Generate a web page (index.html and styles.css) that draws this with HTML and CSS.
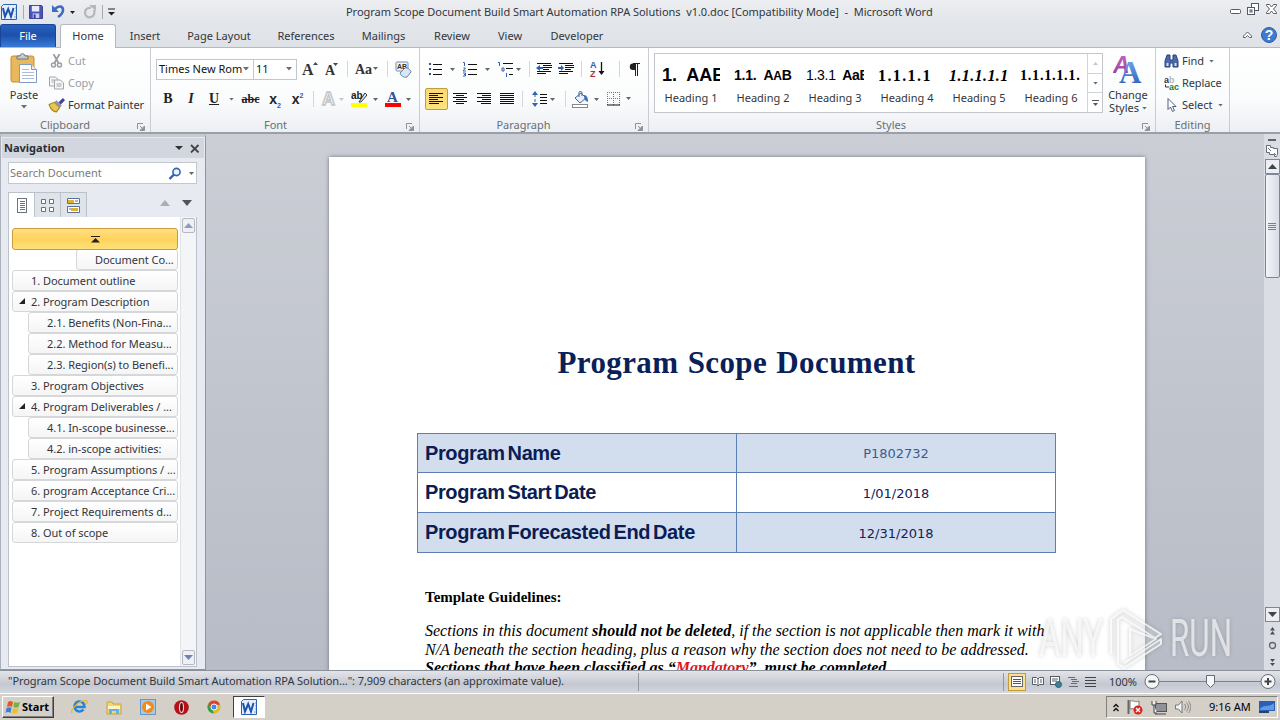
FILE: index.html
```html
<!DOCTYPE html>
<html lang="en">
<head>
<meta charset="utf-8">
<title>Program Scope Document - Microsoft Word</title>
<link rel="stylesheet" href="styles.css">
</head>
<body>
<svg class="defs" width="0" height="0">
  <defs>
    <linearGradient id="gblue" x1="0" y1="0" x2="0" y2="1"><stop offset="0" stop-color="#7fb0ea"/><stop offset="1" stop-color="#2458b8"/></linearGradient>
    <linearGradient id="gpurple" x1="0" y1="0" x2="0" y2="1"><stop offset="0" stop-color="#c964c4"/><stop offset="1" stop-color="#8a3f9c"/></linearGradient>
    <symbol id="dd" viewBox="0 0 6 4"><path d="M0 0h6L3 3.4z" fill="#6a6f77"/></symbol>
    <symbol id="launch" viewBox="0 0 8 8"><path d="M.5 6V.5H6" fill="none" stroke="#8d939b"/><path d="M3 3l2 2M7.500 3v4.500H3z" stroke="#8d939b" fill="#8d939b"/></symbol>
    <symbol id="word" viewBox="0 0 16 16"><path d="M.500 2.500l2-2h13v15H.500z" fill="#e4effb" stroke="#2b5fb0"/><path d="M14 4h1M14 7h1M14 10h1M13 13h2" stroke="#7aa0d8"/><path d="M2 4l2 8.500L7.200 5l2.800 7.500L12.500 4" fill="none" stroke="#1d53ad" stroke-width="2"/></symbol>
  </defs>
</svg>

<header class="titlebar">
  <div class="quick">
    <svg width="16" height="16"><use href="#word"/></svg>
    <i class="vline"></i>
    <svg width="14" height="14" viewBox="0 0 15 15"><path d="M.5.5h13l1 1v13H.5z" fill="#4a55b8" stroke="#34398f"/><path d="M3 1h8v6H3z" fill="#e8ecfa"/><path d="M4 9h7v5H4z" fill="#c9cdea"/><path d="M5 10h2v4H5z" fill="#34398f"/></svg>
    <svg width="24" height="15" viewBox="0 0 24 15"><path d="M3 5c4-4 8-3 8 1 0 3-2 5-5 7" fill="none" stroke="#3e6cc4" stroke-width="2.600"/><path d="M0 1v7h7z" fill="#3e6cc4"/><path d="M18 7h5l-2.500 3z" fill="#222"/></svg>
    <svg width="12" height="14" viewBox="0 0 12 14"><path d="M7 3c-4-1-6 2-6 5s3 5 6 4 4-4 3-7" fill="none" stroke="#b4b7bb" stroke-width="2.200"/><path d="M5 0h7v6z" fill="#b4b7bb"/></svg>
    <i class="vline"></i>
    <svg width="7" height="8" viewBox="0 0 7 8"><path d="M0 1h7" stroke="#222"/><path d="M0 4h7L3.500 7.500z" fill="#222"/></svg>
  </div>
  <div class="title">Program Scope Document Build Smart Automation RPA Solutions&nbsp; v1.0.doc [Compatibility Mode]&nbsp; - &nbsp;Microsoft Word</div>
  <svg class="winbtns" width="48" height="13" viewBox="0 0 48 13"><g fill="#fff" stroke="#555b66"><rect x=".5" y="6.500" width="10" height="4" rx="1"/><rect x="21.500" y=".5" width="7" height="7"/><rect x="17.500" y="4.500" width="7" height="7"/><rect x="20" y="7" width="2" height="2"/><path d="M36.500 1.500h3l2 2.500 2-2.500h3v1L43.500 6l3 3.500v1h-3l-2-2.500-2 2.500h-3v-1l3-3.500-3-3.500z"/></g></svg>
</header>

<nav class="tabs">
  <span class="tab file">File</span><span class="tab home">Home</span><span class="tab insert">Insert</span><span class="tab layout">Page Layout</span><span class="tab refs">References</span><span class="tab mail">Mailings</span><span class="tab review">Review</span><span class="tab view">View</span><span class="tab dev">Developer</span>
  <svg class="help" width="37" height="18" viewBox="0 0 37 18"><path d="M1.500 10L5.500 6l4 4v1.500h-2l-2-2-2 2h-2z" fill="#fff" stroke="#5d636d"/><circle cx="27" cy="9" r="7.500" fill="#3f7bd0" stroke="#2c5ea8"/><text x="27" y="14" text-anchor="middle" class="qmark">?</text></svg>
</nav>

<section class="ribbon">
  <div class="group clipboard">
    <div class="group-body">
      <div class="big paste">
        <svg width="28" height="31" viewBox="0 0 28 31"><rect x="1" y="3" width="23" height="26" rx="2" fill="#e9b75c" stroke="#c48d35"/><path d="M7 6V3h3c0-3 5-3 5 0h3v3z" fill="#c8ccd2" stroke="#70757c"/><path d="M9.500 11.500h12l5 5v13h-17z" fill="#fff" stroke="#7f9cc8"/><path d="M21.500 11.500v5h5" fill="#dfe9f7" stroke="#7f9cc8"/><path d="M12 16.500h7M12 19.500h12M12 22.500h12M12 25.500h12" stroke="#a9bddb"/></svg>
        <span>Paste</span>
        <svg width="6" height="4"><use href="#dd"/></svg>
      </div>
      <div class="cmds">
        <div class="cmd off"><svg width="17" height="14" viewBox="0 0 16 14"><path d="M5 0l5 9M11 0L6 9" stroke="#9a9ea4" stroke-width="1.800"/><circle cx="5" cy="11" r="2" fill="none" stroke="#9a9ea4" stroke-width="1.500"/><circle cx="11" cy="11" r="2" fill="none" stroke="#9a9ea4" stroke-width="1.500"/></svg><span>Cut</span></div>
        <div class="cmd off"><svg width="17" height="14" viewBox="0 0 16 14"><path d="M1 1h6l2 2v7H1z" fill="#f6f6f6" stroke="#a2a5aa"/><path d="M6 4h6l3 3v6H6z" fill="#f6f6f6" stroke="#a2a5aa"/><path d="M3 4h3M3 6h2M8 8h5M8 10h5" stroke="#a2a5aa"/></svg><span>Copy</span></div>
        <div class="cmd"><svg width="17" height="15" viewBox="0 0 16 14"><path d="M1 6l5-2 5 5-3 4c-3 0-6-3-7-7z" fill="#e9c84e" stroke="#a98520"/><path d="M6 4l2-2 5 5-2 2z" fill="#8e96a8"/><path d="M10 4l4-4 2 2-4 4z" fill="#4a3f97"/></svg><span class="fp">Format Painter</span></div>
      </div>
    </div>
    <div class="label"><span>Clipboard</span><svg width="8" height="8"><use href="#launch"/></svg></div>
  </div>

  <div class="group font">
    <div class="rows">
      <div class="row font1">
        <div class="combo"><span>Times New Rom</span><svg width="6" height="4"><use href="#dd"/></svg></div>
        <div class="combo size"><span>11</span><svg width="6" height="4"><use href="#dd"/></svg></div>
        <svg width="16" height="16" viewBox="0 0 16 16"><text x="0" y="14" class="ser b16">A</text><path d="M11 4h5l-2.500-3z" fill="#444"/></svg>
        <svg width="14" height="16" viewBox="0 0 14 16"><text x="0" y="14" class="ser b13">A</text><path d="M8 2h5l-2.500 3z" fill="#444"/></svg>
        <i class="sep"></i>
        <svg width="24" height="16" viewBox="0 0 24 16"><text x="0" y="13" class="ser b13">Aa</text><path d="M18 6h5l-2.500 3z" fill="#666"/></svg>
        <i class="sep"></i>
        <svg width="17" height="17" viewBox="0 0 17 17"><rect x="1" y="1" width="12" height="9" rx="1" fill="#eef3fa" stroke="#7d8da8"/><text x="2" y="8" class="tiny">AB</text><path d="M5 12l5-5c2-1 6 2 6 4l-4 5c-3 1-6-1-7-4z" fill="#dbe6f5" stroke="#6781ab"/></svg>
      </div>
      <div class="row font2">
        <span class="ser glyph">B</span><span class="ser glyph it">I</span><span class="ser glyph un">U</span><svg width="5" height="3"><use href="#dd"/></svg>
        <span class="ser glyph strike">abc</span><span class="glyph xx">x<sub>2</sub></span><span class="glyph xx">x<sup>2</sup></span>
        <i class="sep"></i>
        <svg width="24" height="18" viewBox="0 0 24 18"><text x="1" y="15" class="outlineA">A</text><path d="M18 8h5l-2.500 3z" fill="#c3c6ca"/></svg>
        <svg width="28" height="18" viewBox="0 0 28 18"><rect y="13" width="16" height="4" fill="#ff0"/><text x="0" y="9" class="abtxt">ab</text><path d="M8 12l6-9 2 2-6 7z" fill="#dce8f5" stroke="#333"/><path d="M22 8h5l-2.500 3z" fill="#666"/></svg>
        <svg width="26" height="18" viewBox="0 0 26 18"><rect y="13" width="16" height="4" fill="#f00"/><text x="2" y="12" class="ser fontA">A</text><path d="M21 8h5l-2.500 3z" fill="#666"/></svg>
      </div>
    </div>
    <div class="label"><span>Font</span><svg width="8" height="8"><use href="#launch"/></svg></div>
  </div>

  <div class="group para">
    <div class="rows">
      <div class="row para1">
        <svg width="28" height="16" viewBox="0 0 28 16"><path d="M1 2h2v2H1zM1 7h2v2H1zM1 12h2v2H1z" fill="#3a4e7d"/><path d="M5 3.500h9M5 8.500h9M5 13.500h9" stroke="#111"/><path d="M22 7h5l-2.500 3z" fill="#666"/></svg>
        <svg width="28" height="16" viewBox="0 0 28 16"><path d="M0 1.500h1.500V5M.500 7h2L0 10h3M0 12h2.500v1.500H1 2.500V15H0" fill="none" stroke="#3461b5"/><path d="M5 3.500h9M5 8.500h9M5 13.500h9" stroke="#111"/><path d="M22 7h5l-2.500 3z" fill="#666"/></svg>
        <svg width="24" height="16" viewBox="0 0 24 16"><path d="M0 1.500h1.500V5M4 7h2v3H4zM8.500 12v4" fill="none" stroke="#3461b5"/><path d="M5 2.500h10M8 7.500h7M11 13.500h4" stroke="#111"/><path d="M18 7h5l-2.500 3z" fill="#666"/></svg>
        <i class="sep"></i>
        <svg width="16" height="14" viewBox="0 0 16 14"><path d="M1 1.500h14M7 3.500h9M7 5.500h9M7 7.500h6M1 9.500h14M1 11.500h9" stroke="#111"/><path d="M0 6l4-3v2h3v2H4v2z" fill="#2f62b5"/></svg>
        <svg width="16" height="14" viewBox="0 0 16 14"><path d="M1 1.500h14M7 3.500h9M7 5.500h9M7 7.500h6M1 9.500h14M1 11.500h9" stroke="#111"/><path d="M6 6L3 3v2H0v2h3v2z" fill="#2f62b5"/></svg>
        <i class="sep"></i>
        <svg width="15" height="16" viewBox="0 0 15 16"><text x="0" y="7" class="az blue">A</text><text x="0" y="16" class="az red">Z</text><path d="M11.500 1v12" stroke="#111" stroke-width="1.300"/><path d="M8.500 10h6l-3 4z" fill="#111"/></svg>
        <i class="sep"></i>
        <svg width="11" height="13" viewBox="0 0 11 13"><path d="M6 .500H4a3 3 0 0 0 0 6.500h2z" fill="#222"/><path d="M6.500 0v13M8.500 0v13M4 .500h7" stroke="#222"/></svg>
      </div>
      <div class="row para2">
        <div class="pressed"><svg width="14" height="12" viewBox="0 0 14 12"><path d="M0 .500h14M0 2.500h9M0 4.500h14M0 6.500h9M0 8.500h14M0 10.500h10" stroke="#111"/></svg></div>
        <svg width="14" height="12" viewBox="0 0 14 12"><path d="M0 .500h14M3 2.500h8M0 4.500h14M3 6.500h8M0 8.500h14M3 10.500h8" stroke="#111"/></svg>
        <svg width="14" height="12" viewBox="0 0 14 12"><path d="M0 .500h14M5 2.500h9M0 4.500h14M5 6.500h9M0 8.500h14M4 10.500h10" stroke="#111"/></svg>
        <svg width="14" height="12" viewBox="0 0 14 12"><path d="M0 .500h14M0 2.500h14M0 4.500h14M0 6.500h14M0 8.500h14M0 10.500h14" stroke="#111"/></svg>
        <i class="sep"></i>
        <svg width="24" height="16" viewBox="0 0 24 16"><path d="M3 3v10" stroke="#2f62b5" stroke-dasharray="3 2"/><path d="M0 4h6L3 0zM0 12h6l-3 4z" fill="#2f62b5"/><path d="M8 3.500h7M8 6.500h7M8 9.500h7M8 12.500h7" stroke="#111"/><path d="M18 7h5l-2.500 3z" fill="#666"/></svg>
        <i class="sep"></i>
        <svg width="28" height="17" viewBox="0 0 28 17"><path d="M3 7l6-5 5 5-6 5z" fill="#e8f0fb" stroke="#49648f"/><path d="M7 6V1c1-1 3-1 3 1v3" fill="none" stroke="#49648f"/><path d="M12 4c3 0 4 3 4 7-3-1-4-3-4-7z" fill="#3b71be"/><rect x=".5" y="13.500" width="15" height="3" fill="#fff" stroke="#888"/><path d="M22 7h5l-2.500 3z" fill="#666"/></svg>
        <svg width="24" height="14" viewBox="0 0 24 14"><path d="M0 .500h13M0 6.500h13M.500 0v13M6.500 0v13M12.500 0v13" stroke="#777" stroke-dasharray="1 1"/><path d="M0 13h13" stroke="#111"/><path d="M19 5h5l-2.500 3z" fill="#666"/></svg>
      </div>
    </div>
    <div class="label"><span>Paragraph</span><svg width="8" height="8"><use href="#launch"/></svg></div>
  </div>

  <div class="group styles">
    <div class="group-body">
      <div class="gallery">
        <div class="style"><b class="s1">1.&nbsp; AAE</b><span>Heading 1</span></div>
        <div class="style"><b class="s2">1.1.&nbsp; A<small>A</small>Bb</b><span>Heading 2</span></div>
        <div class="style"><b class="s3"><i>1.3.1</i>&nbsp; AaB</b><span>Heading 3</span></div>
        <div class="style"><b class="s4">1.1.1.1</b><span>Heading 4</span></div>
        <div class="style"><b class="s5">1.1.1.1.1</b><span>Heading 5</span></div>
        <div class="style"><b class="s6">1.1.1.1.1.</b><span>Heading 6</span></div>
        <div class="scroller">
          <span><svg width="5" height="3" viewBox="0 0 5 3"><path d="M0 3h5L2.500 0z" fill="#c3c6ca"/></svg></span>
          <span><svg width="5" height="3"><use href="#dd"/></svg></span>
          <span><svg width="7" height="6" viewBox="0 0 7 6"><path d="M0 .500h7" stroke="#555"/><path d="M1 3h5L3.500 6z" fill="#555"/></svg></span>
        </div>
      </div>
      <div class="big change">
        <svg width="30" height="29" viewBox="0 0 30 29"><text x="0" y="18" class="chA1">A</text><text x="6" y="28" class="chA2">A</text></svg>
        <span>Change</span>
        <span>Styles <svg width="5" height="3"><use href="#dd"/></svg></span>
      </div>
    </div>
    <div class="label"><span>Styles</span><svg width="8" height="8"><use href="#launch"/></svg></div>
  </div>

  <div class="group editing">
    <div class="cmds">
      <div class="cmd"><svg width="15" height="14" viewBox="0 0 15 14"><path d="M3 1h3v5h3V1h3l2 6v6H9V9H6v4H1V7z" fill="#4a6ba8" stroke="#2b437a"/><path d="M2.500 9h2v3h-2zM10.500 9h2v3h-2z" fill="#cfdcf2"/></svg><span>Find</span><svg width="5" height="3"><use href="#dd"/></svg></div>
      <div class="cmd"><svg width="15" height="15" viewBox="0 0 15 15"><text x="0" y="7" class="rep1">a<tspan fill="#b5b8bd">b</tspan></text><text x="5" y="14" class="rep2">ac</text><path d="M1.500 8.500v2.500H5" fill="none" stroke="#333"/></svg><span class="fp">Replace</span></div>
      <div class="cmd"><svg width="15" height="14" viewBox="0 0 15 14"><path d="M4 .500v11l2.500-2.500 2 4.500 2-1-2-4h3.500z" fill="#fff" stroke="#4c5f86"/></svg><span>Select</span><svg width="5" height="3"><use href="#dd"/></svg></div>
    </div>
    <div class="label"><span>Editing</span></div>
  </div>
</section>

<main class="workspace">
  <aside class="navpane">
    <div class="navhead"><b>Navigation</b><svg width="26" height="9" viewBox="0 0 26 9"><path d="M1 2h8L5 6z" fill="#333"/><path d="M17 1l7.500 7.500M24.500 1L17 8.500" stroke="#444" stroke-width="1.800"/></svg></div>
    <div class="search"><span>Search Document</span><svg width="27" height="13" viewBox="0 0 27 13"><circle cx="8.500" cy="5" r="3.600" fill="#eef5ff" stroke="#2d62b8" stroke-width="1.600"/><path d="M6 7.500L1.500 12" stroke="#2d62b8" stroke-width="2.400"/><path d="M21 5h5l-2.500 3z" fill="#666"/></svg></div>
    <div class="navtabs">
      <span class="on"><svg width="10" height="15" viewBox="0 0 10 15"><rect x=".5" y=".5" width="9" height="14" fill="#fff" stroke="#6b7280"/><path d="M3 3.500h5M3 5.500h5M3 7.500h5M3 9.500h5M3 11.500h5" stroke="#6b7280"/></svg></span>
      <span><svg width="13" height="15" viewBox="0 0 13 15"><path d="M.500 1.500h4v4h-4zM8.500 1.500h4v4h-4zM.500 9.500h4v4h-4zM8.500 9.500h4v4h-4z" fill="#fff" stroke="#5b7199"/></svg></span>
      <span><svg width="13" height="15" viewBox="0 0 13 15"><path d="M.500.500h12v5H.500zM.500 8.500h12v6H.500z" fill="#fff" stroke="#5b7199"/><path d="M1 2h6v3H1zM4 10h7v3H4z" fill="#e0b22c"/><path d="M8 3h3M2 11h2" stroke="#5b7199"/></svg></span>
      <svg class="updown" width="33" height="6" viewBox="0 0 33 6"><path d="M1 6h10L6 0z" fill="#a9adb6"/><path d="M23 0h10l-5 6z" fill="#4f545e"/></svg>
    </div>
    <div class="outline">
      <div class="items">
        <div class="item top"><svg width="9" height="7" viewBox="0 0 9 7"><path d="M0 .500h9" stroke="#222"/><path d="M0 6.500h9L4.500 2z" fill="#222"/></svg></div>
        <div class="item deep">Document Co...</div>
        <div class="item">1. Document outline</div>
        <div class="item open">2. Program Description</div>
        <div class="item sub">2.1. Benefits (Non-Fina...</div>
        <div class="item sub">2.2. Method for Measu...</div>
        <div class="item sub">2.3. Region(s) to Benefi...</div>
        <div class="item">3. Program Objectives</div>
        <div class="item open">4. Program Deliverables / ...</div>
        <div class="item sub">4.1. In-scope businesse...</div>
        <div class="item sub">4.2. in-scope activities:</div>
        <div class="item">5. Program Assumptions / ...</div>
        <div class="item">6. program Acceptance Cri...</div>
        <div class="item">7. Project Requirements d...</div>
        <div class="item">8. Out of scope</div>
      </div>
      <div class="navscroll">
        <span><svg width="9" height="5" viewBox="0 0 9 5"><path d="M0 5h9L4.500 0z" fill="#8f9bc0"/></svg></span>
        <span><svg width="9" height="5" viewBox="0 0 9 5"><path d="M0 0h9L4.500 5z" fill="#7282ad"/></svg></span>
      </div>
    </div>
  </aside>

  <div class="canvas">
    <article class="page">
      <h1>Program Scope Document</h1>
      <div class="facts">
        <div class="fact first shade"><b>Program Name</b><span class="pale">P1802732</span></div>
        <div class="fact mid"><b>Program Start Date</b><span>1/01/2018</span></div>
        <div class="fact shade"><b>Program Forecasted End Date</b><span>12/31/2018</span></div>
      </div>
      <h2>Template Guidelines:</h2>
      <p>Sections in this document <b>should not be deleted</b>, if the section is not applicable then mark it with</p>
      <p>N/A beneath the section heading, plus a reason why the section does not need to be addressed.</p>
      <p><b>Sections that have been classified as “<em>Mandatory</em>”&nbsp; must be completed.</b></p>
    </article>
    <svg class="watermark" width="200" height="66" viewBox="0 0 200 66">
      <g class="wm"><text x="5" y="51" textLength="64" lengthAdjust="spacingAndGlyphs">ANY</text><text x="136" y="51" textLength="62" lengthAdjust="spacingAndGlyphs">RUN</text></g>
      <path class="play" d="M77 49V14l12-9 38 24-6 4-33-21-4 3v44M84 59l6 4 37-24v-5l-37 24M96 24v27l26-17z"/>
    </svg>
  </div>

  <div class="vscroll">
    <i class="split"></i>
    <svg width="12" height="12" viewBox="0 0 12 12"><path d="M.500.500h4v2h3v1h4v6l-1 2h-2v-2H3.500v-2h-3z" fill="#fff" stroke="#666c78"/><path d="M2 3l3 3M8 8l2 2" stroke="#666c78"/></svg>
    <span class="sbtn"><svg width="9" height="5" viewBox="0 0 9 5"><path d="M0 5h9L4.500 0z" fill="#3f434b"/></svg></span>
    <span class="thumb"><svg width="8" height="7" viewBox="0 0 8 7"><path d="M0 .500h8M0 2.500h8M0 4.500h8M0 6.500h8" stroke="#7b828f"/></svg></span>
    <span class="sbtn down"><svg width="9" height="5" viewBox="0 0 9 5"><path d="M0 0h9L4.500 5z" fill="#3f434b"/></svg></span>
    <svg class="browse" width="9" height="40" viewBox="0 0 9 40"><path d="M2 3.500L4.500 0 7 3.500zM2 7.500L4.500 4 7 7.500zM2 32h5l-2.500 3zM2 36h5l-2.500 3z" fill="#4a4f58"/><circle cx="4.500" cy="18.500" r="3" fill="#d5d8df" stroke="#5f6570" stroke-width="1.300"/></svg>
  </div>
</main>

<footer class="status">
  <span class="stext">"Program Scope Document Build Smart Automation RPA Solution...": 7,909 characters (an approximate value).</span>
  <i class="stick"></i>
  <div class="sright">
    <i class="stick"></i>
    <span class="viewon"><svg width="12" height="11" viewBox="0 0 12 11"><rect x=".5" y=".5" width="11" height="10" fill="#fff" stroke="#666"/><path d="M2 3.500h8M2 5.500h8M2 7.500h8" stroke="#555"/></svg></span>
    <svg width="12" height="11" viewBox="0 0 12 11"><path d="M.500 1.500h4L6 3l1.500-1.500h4v7h-4L6 10 4.500 8.500h-4zM6 3v7M2 4h2M2 6h2M8 4h2M8 6h2" fill="#fff" stroke="#555b66"/></svg>
    <svg width="12" height="12" viewBox="0 0 12 12"><rect x=".5" y=".5" width="9" height="8" fill="#fff" stroke="#555b66"/><path d="M2 3h6M2 5h5" stroke="#555b66"/><circle cx="8.500" cy="8.500" r="3" fill="#3d7ea8" stroke="#2f6b42"/></svg>
    <svg width="11" height="10" viewBox="0 0 11 10"><path d="M0 .500h7M3 2.500h6M4 4.500h7M3 6.500h6M1 9.500h9" stroke="#666c76"/></svg>
    <svg width="11" height="10" viewBox="0 0 11 10"><path d="M0 .500h11M0 3.500h11M0 6.500h11M0 9.500h11" stroke="#444"/></svg>
    <span class="pct">100%</span>
    <svg class="zoomer" width="132" height="17" viewBox="0 0 132 17"><path d="M15 8.500h102" stroke="#7d838e"/><circle cx="8" cy="8.500" r="7" fill="#f5f6f8" stroke="#676d78"/><path d="M4.500 8.500h7" stroke="#444" stroke-width="2"/><path d="M62.500 2.500h8v8l-4 4-4-4z" fill="#f7f8fa" stroke="#676d78"/><circle cx="124" cy="8.500" r="7" fill="#f5f6f8" stroke="#676d78"/><path d="M120.500 8.500h7M124 5v7" stroke="#444" stroke-width="2"/></svg>
  </div>
</footer>

<div class="taskbar">
  <div class="start"><svg width="16" height="15" viewBox="0 0 16 15"><path d="M3 2c2-1.500 3-1.500 5 0L7 7C5 6 4 6 2 7z" fill="#e5562b"/><path d="M9 2c2 1 4 1 6 0l-1.500 5c-2 1-3.500 1-5 0z" fill="#6fb543"/><path d="M1.500 8c2-1 3.500-1 5 0L5.500 13c-2-1.500-3.500-1-5 0z" fill="#3b7fd4"/><path d="M8 8c2 1 3.500 1 5.500 0L12 13c-2 1-3.500 1-5 0z" fill="#f2bd2c"/></svg><b>Start</b></div>
  <div class="launch">
    <svg width="17" height="16" viewBox="0 0 17 16"><path d="M12.500 10.500A5 5 0 1 1 13.500 8H5" fill="none" stroke="#2586d8" stroke-width="2.600"/><path d="M1 14C-1 11 9 0 16 2c1 1-1 3-1 3" fill="none" stroke="#edb62e" stroke-width="1.300"/></svg>
    <svg width="16" height="15" viewBox="0 0 16 15"><path d="M1 2h5l1 2h8v10H1z" fill="#f2d477" stroke="#c9a53c"/><path d="M2 6h12v3H2z" fill="#fdf3c6"/><path d="M3 9h10v5h-3v-3H6v3H3z" fill="#63b2e4"/></svg>
    <svg width="16" height="16" viewBox="0 0 16 16"><rect x=".5" y=".5" width="15" height="15" fill="#a6c9ea" stroke="#6797c8"/><circle cx="8" cy="8" r="6" fill="#f28a1a"/><path d="M6 4.500v7L11.500 8z" fill="#fff"/></svg>
    <svg width="15" height="15" viewBox="0 0 15 15"><circle cx="7.500" cy="7.500" r="7.300" fill="#b81018"/><ellipse cx="7.500" cy="7.500" rx="2" ry="5" fill="#5d0508" stroke="#f6d0d0" stroke-width="1.200"/></svg>
    <svg width="14" height="14" viewBox="0 0 15 15"><circle cx="7.500" cy="7.500" r="7" fill="#e2b92c"/><path d="M1.200 4.500A7 7 0 0 1 14 5H7.500L5 9z" fill="#dd4435"/><path d="M1.200 4.500L5.500 10l2 4.500A7 7 0 0 1 1.200 4.500z" fill="#2f9f52"/><circle cx="7.500" cy="7.500" r="3.200" fill="#4388ec" stroke="#fff"/></svg>
  </div>
  <div class="active"><svg width="16" height="16"><use href="#word"/></svg></div>
  <div class="tray">
    <svg width="6" height="9" viewBox="0 0 6 9"><path d="M.500 4L3 1.500 5.500 4M.500 8L3 5.500 5.500 8" fill="none" stroke="#111" stroke-width="1.400"/></svg>
    <svg width="16" height="16" viewBox="0 0 16 16"><path d="M1.500 1v14" stroke="#666" stroke-width="2"/><path d="M3 2c4-1 5 2 9 0v8c-4 1-5-1-9 0z" fill="#fff" stroke="#777"/><circle cx="11" cy="11" r="4.500" fill="#d9241c"/><path d="M9 9l4 4M13 9l-4 4" stroke="#fff" stroke-width="1.400"/></svg>
    <svg width="16" height="15" viewBox="0 0 16 15"><rect x="4.500" y="3.500" width="11" height="8" fill="#8f9398" stroke="#555"/><path d="M4 14h11M1 1v4h4V1M3 5v8h3" stroke="#444" fill="#eee"/></svg>
    <svg width="16" height="14" viewBox="0 0 16 14"><path d="M.500 5h3L7 1v12L3.500 9h-3z" fill="#f4f4f4" stroke="#777"/><path d="M9.500 4c1.500 2 1.500 4 0 6M11.500 2.500c2.500 3 2.500 6 0 9M13.500 1c3 4 3 8 0 12" fill="none" stroke="#888"/></svg>
    <span>9:16 AM</span>
    <svg width="16" height="13" viewBox="0 0 16 13"><path d="M0 0h16v10H0z" fill="#2a5fb5"/><path d="M1 8c4-5 9-1 14-6v7H1z" fill="#5f9be0"/><path d="M0 10h10v2H0z" fill="#27436d"/></svg>
  </div>
</div>
</body>
</html>
```
FILE: styles.css
```css
* { box-sizing: border-box; }
body {
  margin: 0; width: 1280px; height: 720px; overflow: hidden;
  display: flex; flex-direction: column;
  font: 11px/14px "Noto Sans", "Liberation Sans", sans-serif; color: #32363c;
  background: #dfe2e6;
}
svg { display: block; flex: none; }
i { font-style: normal; }
b { font-weight: 700; }
.defs { position: absolute; }

/* title bar and tabs */
.titlebar { height: 24px; display: flex; background: linear-gradient(#eceef1, #e2e5e9); }
.quick { width: 346px; display: flex; align-items: center; gap: 8.500px; padding-left: 1px; height: 23px; }
.vline { width: 1px; height: 14px; background: #a6abb3; margin: 0 -2px 0 -3px; }
.quick .vline + svg { margin-left: -1px; }
.title { line-height: 24px; white-space: pre; letter-spacing: -.035px; }
.winbtns { margin: 3px 2px 0 auto; }
.tabs { height: 24px; display: flex; background: linear-gradient(#e2e5e9, #dfe2e6); border-bottom: 1px solid #b4b9c1; }
.tab { line-height: 24px; text-align: center; white-space: nowrap; }
.file { width: 56px; color: #fff; background: linear-gradient(#2a63c0, #1c50ad 45%, #3a7ad6); border: 1px solid #174796; border-bottom: 0; border-radius: 3px 3px 0 0; line-height: 22px; }
.home { width: 56px; margin-left: 4px; height: 24px; background: #fff; border: 1px solid #b4b9c1; border-bottom: 0; border-radius: 3px 3px 0 0; line-height: 22px; }
.insert { width: 58px; }
.layout { width: 90px; }
.refs { width: 84px; }
.mail { width: 71px; }
.review { width: 66px; }
.view { width: 50px; }
.dev { width: 84px; }
.help { margin: 2px 1px 0 auto; }
.qmark { font: bold 14px "Liberation Sans", sans-serif; fill: #fff; }

/* ribbon */
.ribbon { height: 86px; display: flex; background: linear-gradient(#fff, #fbfcfd 60%, #eceff3); border-bottom: 2px solid #9a9fa8; }
.group { display: flex; flex-direction: column; border-right: 1px solid #c9cdd3; }
.group-body { display: flex; height: 70px; }
.clipboard { width: 151px; }
.font { width: 269px; padding-left: 5px; }
.para { width: 229px; padding-left: 5px; }
.styles { width: 507px; }
.editing { width: 74px; }
.label { display: flex; justify-content: center; color: #6a6f78; line-height: 14px; height: 14px; position: relative; }
.label svg { position: absolute; right: 5px; top: 5px; }
.clipboard .label { padding-right: 20px; }
.font .label { padding-right: 24px; }
.para .label { padding-right: 26px; }
.styles .label { padding-right: 22px; }
.big { display: flex; flex-direction: column; align-items: center; }
.paste { width: 48px; padding-top: 5px; }
.paste span { line-height: 15px; margin: 3px 0 3px; }
.cmds { display: flex; flex-direction: column; padding-top: 2px; height: 70px; }
.cmd { display: flex; align-items: center; height: 22px; gap: 3px; white-space: nowrap; }
.cmds .cmd svg + span + svg { margin-left: 2px; }
.fp { letter-spacing: -.1px; }
.off { color: #9b9fa5; }
.editing .cmds { padding-left: 8px; }
.rows { height: 70px; padding-top: 6px; display: flex; flex-direction: column; gap: 4px; }
.row { display: grid; align-items: center; justify-items: center; height: 30px; }
.font1 { grid-template-columns: 98px 43px 25px 19px 12px 28px 13px 18px; }
.font2 { grid-template-columns: 24px 22px 24px 10px 29px 20px 25px 7px 31px 33px 33px; height: 22px; }
.para1 { grid-template-columns: 34px 35px 32px 7px 22px 22px 8px 25px 18px 12px; }
.para2 { grid-template-columns: 22px 26px 22px 24px 7px 36px 6px 36px 30px; height: 22px; }
.sep { width: 1px; height: 16px; background: #d3d6db; }
.combo { width: 98px; height: 21px; border: 1px solid #c3c7cd; background: #fff; display: flex; align-items: center; justify-content: space-between; padding: 0 4px 0 2px; color: #111; white-space: nowrap; }
.size { width: 43px; border-left: 0; }
.ser, .glyph { font-family: "Liberation Serif", serif; font-weight: 700; }
.b16 { font-size: 16px; fill: #333; }
.b13 { font-size: 14px; fill: #333; }
.tiny { font: bold 7px "Liberation Sans", sans-serif; fill: #333; }
.glyph { font-size: 14px; line-height: 18px; color: #222; }
.it { font-style: italic; }
.un { text-decoration: underline; }
.strike { text-decoration: line-through; font-size: 12px; }
.xx { font-family: "Liberation Sans", sans-serif; }
.glyph sub, .glyph sup { font-size: 7px; line-height: 0; color: #2b5db8; }
.outlineA { font: bold 18px "Liberation Sans", sans-serif; fill: #f4f4f4; stroke: #c0c3c8; stroke-width: 1.3px; }
.abtxt { font: bold 10px "Liberation Sans", sans-serif; fill: #222; }
.fontA { font-size: 15px; fill: #2f5597; }
.az { font: bold 9px "Liberation Sans", sans-serif; }
.blue { fill: #2b5db8; }
.red { fill: #b03030; }
.pressed { width: 23px; height: 22px; display: grid; place-items: center; border: 1px solid #c29b3e; border-radius: 2px; background: linear-gradient(#fbd876, #fde37e); }

.gallery { display: flex; width: 449px; height: 60px; margin: 5px 0 0 5px; border: 1px solid #c3c7cd; background: #fff; }
.style { width: 72px; flex: none; display: flex; flex-direction: column; align-items: center; padding-top: 10px; }
.style b { height: 23px; width: 58px; overflow: hidden; white-space: nowrap; color: #000; line-height: 23px; font-family: "Liberation Sans", sans-serif; }
.style span { line-height: 22px; }
.s1 { font-size: 18px; }
.style .s2 { font-size: 14px; letter-spacing: -.2px; }
.s2 small { font-size: 12px; }
.style .s3 { font-size: 14px; letter-spacing: -.3px; }
.s3 i { font-weight: 400; }
.style .s4, .style .s5, .style .s6 { font-family: "Liberation Serif", serif; font-size: 16px; letter-spacing: 1.4px; }
.style .s5 { font-style: italic; letter-spacing: .4px; width: 60px; }
.style .s6 { font-size: 14.500px; letter-spacing: .6px; width: 62px; }
.scroller { width: 15px; display: flex; flex-direction: column; border-left: 1px solid #d0d3d8; }
.scroller span { flex: 1; display: grid; place-items: center; border-bottom: 1px solid #d0d3d8; }
.scroller span:last-child { border-bottom: 0; }
.change { width: 50px; padding-top: 7px; line-height: 13px; }
.change svg + span { margin-top: 4px; }
.change span svg { display: inline-block; vertical-align: 2px; }
.chA1 { font: italic bold 23px "Liberation Sans", sans-serif; fill: url(#gpurple); }
.chA2 { font: bold 31px "Liberation Serif", serif; fill: url(#gblue); }
.rep1 { font: bold 9px "Liberation Sans", sans-serif; fill: #333; }
.rep2 { font: bold 9px "Liberation Sans", sans-serif; fill: #1f7a3a; }

/* workspace */
.workspace { flex: 1; min-height: 0; display: flex; background: linear-gradient(#cbced5, #b7bcc6); }
.navpane { width: 206px; padding: 4px 8px 2px 8px; display: flex; flex-direction: column; background: #e7eaf0; border: 1px solid #8f959f; border-top-width: 3px; border-top-color: #c6cad1; border-left: 1px solid #aab0ba; }
.navhead { margin: -3px -7px 4px; height: 20px; display: flex; justify-content: space-between; align-items: center; padding: 0 4px 0 2px; background: #d2d6de; color: #2a2e35; }
.search { margin-left: -1px; height: 22px; display: flex; justify-content: space-between; align-items: center; background: #fff; border: 1px solid #c3c8d0; color: #777c85; padding: 0 1px 0 1px; }
.navtabs { margin: 8px 0 0 -1px; height: 25px; display: flex; }
.navtabs span { width: 26px; display: grid; place-items: center; border: 1px solid #bcc2cb; border-left: 0; border-bottom: 0; background: #dfe3ea; }
.navtabs .on { width: 27px; background: #fff; border-left: 1px solid #bcc2cb; }
.updown { margin: 8px 5px 0 auto; }
.outline { flex: 1; margin-left: -1px; border: 1px solid #bcc2cb; border-top: 0; background: #fff; display: flex; }
.items { width: 170px; padding: 11px 1px 0 3px; display: flex; flex-direction: column; color: #32363c; letter-spacing: -.04px; }
.item { height: 21px; flex: none; padding-left: 18px; line-height: 19px; border: 1px solid #d5d7db; border-radius: 3px; background: linear-gradient(#fff, #f5f5f6); white-space: nowrap; }
.item.top { height: 22px; margin-bottom: -1px; padding: 0; display: grid; place-items: center; background: linear-gradient(#ffdf86, #ffd35c 50%, #ffe07c); border-color: #c99b3a; z-index: 1; }
.item.sub { margin-left: 16px; }
.item.deep { margin-left: 64px; }
.item.open::before { content: ""; float: left; margin: 6px 0 0 -12px; border-left: 6px solid transparent; border-bottom: 6px solid #222; }
.navscroll { margin-left: auto; width: 16px; display: flex; flex-direction: column; justify-content: space-between; border-left: 1px solid #e1e3e7; background: #f4f5f7; padding: 1px; }
.navscroll span { height: 15px; border: 1px solid #b3b9c4; border-radius: 2px; display: grid; place-items: center; background: #eef0f4; }
.canvas { flex: 1; position: relative; overflow: hidden; padding: 23px 0 0 123px; }
.page { width: 816px; height: 600px; background: #fff; box-shadow: 0 0 4px #6f7580; padding: 187px 89px 0 88px; color: #000; font-family: "Liberation Serif", serif; }
.page h1 { margin: 0; text-align: center; color: #0a2058; font: bold 31px/38px "Liberation Serif", serif; white-space: nowrap; letter-spacing: .4px; word-spacing: 1px; }
.facts { margin-top: 51px; width: 639px; border: 1px solid #5b7fb4; font-family: "Liberation Sans", sans-serif; color: #14205c; }
.fact { display: grid; grid-template-columns: 319px 318px; height: 39px; align-items: center; }
.fact.first, .fact.first b { height: 38px; line-height: 38px; }
.mid { height: 41px; border: solid #5b7fb4; border-width: 1px 0; }
.fact b { padding-left: 7px; font-size: 20px; line-height: 38px; height: 39px; letter-spacing: -.38px; word-spacing: -2.200px; border-right: 1px solid #5b7fb4; white-space: nowrap; color: #0c1c54; }
.fact span { text-align: center; font: 13px/16px "DejaVu Sans", sans-serif; padding-top: 2px; }
.shade { background: #d2deee; }
.fact .pale { color: #3c5c90; }
.page h2 { margin: 35px 0 15px 8px; font: bold 15px/19px "Liberation Serif", serif; }
.page p { margin: 0 0 0 8px; font: italic 16px/18.500px "Liberation Serif", serif; white-space: nowrap; }
.page em { color: #e0141c; }
.watermark { position: absolute; left: 828px; top: 471px; filter: drop-shadow(0 0 2px rgba(70, 74, 82, .4)); }
.wm text { font: 52px Roboto, sans-serif; fill: #fff; fill-opacity: .65; }
.play { fill: #fff; fill-opacity: .25; stroke: #fff; stroke-opacity: .75; stroke-width: 2px; stroke-linejoin: round; }

.vscroll { width: 16px; display: flex; flex-direction: column; align-items: center; background: #dadde4; padding-top: 5px; }
.split { width: 8px; height: 2px; background: #5f6570; margin-bottom: 4px; }
.sbtn { width: 15px; height: 15px; margin-top: 2px; display: grid; place-items: center; border: 1px solid #80869a; background: #eceef3; }
.thumb { width: 15px; height: 104px; display: grid; place-items: center; border: 1px solid #80869a; border-radius: 2px; background: linear-gradient(90deg, #f4f5f9, #d8dbe5); }
.down { margin-top: auto; }
.browse { margin: 5px 0 3px; }

/* status bar */
.status { height: 23px; display: flex; align-items: center; background: linear-gradient(#e2e4e9, #c4c8d0 60%, #d4d7de); border-top: 1px solid #8a9099; padding-left: 8px; }
.stext { width: 630px; white-space: nowrap; letter-spacing: -.08px; line-height: 14px; margin-top: -2px; }
.stick { width: 1px; height: 18px; background: #9298a3; }
.sright { margin: -1px 0 0 auto; display: flex; align-items: center; gap: 6px; padding-right: 4px; }
.sright .stick { margin-right: -2px; }
.viewon { width: 18px; height: 18px; display: grid; place-items: center; border: 1px solid #c29b3e; background: #fde08a; }
.pct { margin-left: 7px; }
.zoomer { margin-left: 1px; }

/* taskbar */
.taskbar { height: 27px; display: flex; align-items: center; background: #d4d0c8; border-top: 1px solid #fff; padding: 0 2px; }
.start { width: 52px; height: 22px; display: flex; align-items: center; gap: 1px; padding-left: 2px; border: 1px solid; border-color: #fff #404040 #404040 #fff; box-shadow: inset -1px -1px #808080; color: #000; }
.launch { width: 179px; display: flex; gap: 18px; padding-left: 17px; align-items: center; }
.active { width: 32px; height: 22px; display: grid; place-items: center; background: #fff; border: 1px solid; border-color: #404040 #fff #fff #404040; }
.tray { margin-left: auto; width: 172px; height: 22px; display: flex; align-items: center; gap: 8px; padding-left: 6px; border: 1px solid; border-color: #808080 #fff #fff #808080; color: #000; }
.tray span { margin-left: 10px; white-space: nowrap; }
```
